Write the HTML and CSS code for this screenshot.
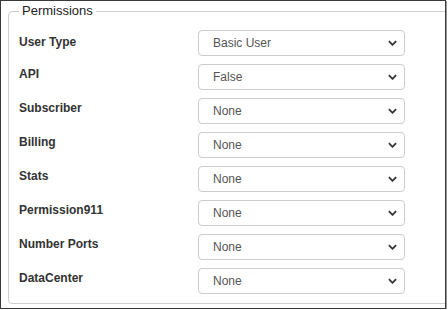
FILE: index.html
```html
<!DOCTYPE html>
<html>
<head>
<meta charset="utf-8">
<link rel="stylesheet" href="styles.css">
</head>
<body>
<div class="frame">
  <fieldset class="perms">
    <legend class="perms-legend">Permissions</legend>
    <div class="rows">
      <div class="row"><label class="lbl lbl-first">User Type</label><div class="sel"><span>Basic User</span><svg class="chev" viewBox="0 0 10 6"><path d="M1 1 L5 5 L9 1" /></svg></div></div>
      <div class="row"><label class="lbl">API</label><div class="sel"><span>False</span><svg class="chev" viewBox="0 0 10 6"><path d="M1 1 L5 5 L9 1" /></svg></div></div>
      <div class="row"><label class="lbl">Subscriber</label><div class="sel"><span>None</span><svg class="chev" viewBox="0 0 10 6"><path d="M1 1 L5 5 L9 1" /></svg></div></div>
      <div class="row"><label class="lbl">Billing</label><div class="sel"><span>None</span><svg class="chev" viewBox="0 0 10 6"><path d="M1 1 L5 5 L9 1" /></svg></div></div>
      <div class="row"><label class="lbl">Stats</label><div class="sel"><span>None</span><svg class="chev" viewBox="0 0 10 6"><path d="M1 1 L5 5 L9 1" /></svg></div></div>
      <div class="row"><label class="lbl">Permission911</label><div class="sel"><span>None</span><svg class="chev" viewBox="0 0 10 6"><path d="M1 1 L5 5 L9 1" /></svg></div></div>
      <div class="row"><label class="lbl">Number Ports</label><div class="sel"><span>None</span><svg class="chev" viewBox="0 0 10 6"><path d="M1 1 L5 5 L9 1" /></svg></div></div>
      <div class="row"><label class="lbl">DataCenter</label><div class="sel"><span>None</span><svg class="chev" viewBox="0 0 10 6"><path d="M1 1 L5 5 L9 1" /></svg></div></div>
    </div>
  </fieldset>
</div>
</body>
</html>
```
FILE: styles.css
```css
html, body {
  margin: 0;
  padding: 0;
  background: #fff;
}
body {
  font-family: "Liberation Sans", Arial, sans-serif;
  color: #333;
}
.frame {
  box-sizing: border-box;
  width: 446px;
  height: 309px;
  border: 1px solid #3a3a3a;
  box-shadow: 1px 1px 0 #9a9a9a;
  overflow: hidden;
}
.perms {
  box-sizing: border-box;
  margin: 2px 0 0 7px;
  width: 470px;
  height: 301px;
  border: 1px solid #cfcfcf;
  border-radius: 4px;
  padding: 0 0 0 10px;
}
.perms-legend {
  font-size: 13px;
  line-height: 16px;
  padding: 0 3px;
  margin-left: 0;
  color: #222;
}
.rows {
  display: flex;
  flex-direction: column;
  gap: 8px;
  padding-top: 11px;
}
.row {
  display: flex;
  align-items: flex-start;
}
.lbl {
  width: 179px;
  font-size: 12px;
  font-weight: bold;
  color: #333;
  line-height: 16px;
  padding-top: 2px;
}
.lbl-first {
  padding-top: 4px;
}
.sel {
  box-sizing: border-box;
  width: 207px;
  height: 26px;
  border: 1px solid #ccc;
  border-radius: 4px;
  display: flex;
  align-items: center;
  justify-content: space-between;
  padding: 0 7px 0 14px;
  font-size: 12px;
  color: #555;
}
.chev {
  width: 9px;
  height: 6px;
  fill: none;
  stroke: #333;
  stroke-width: 2;
}
```
